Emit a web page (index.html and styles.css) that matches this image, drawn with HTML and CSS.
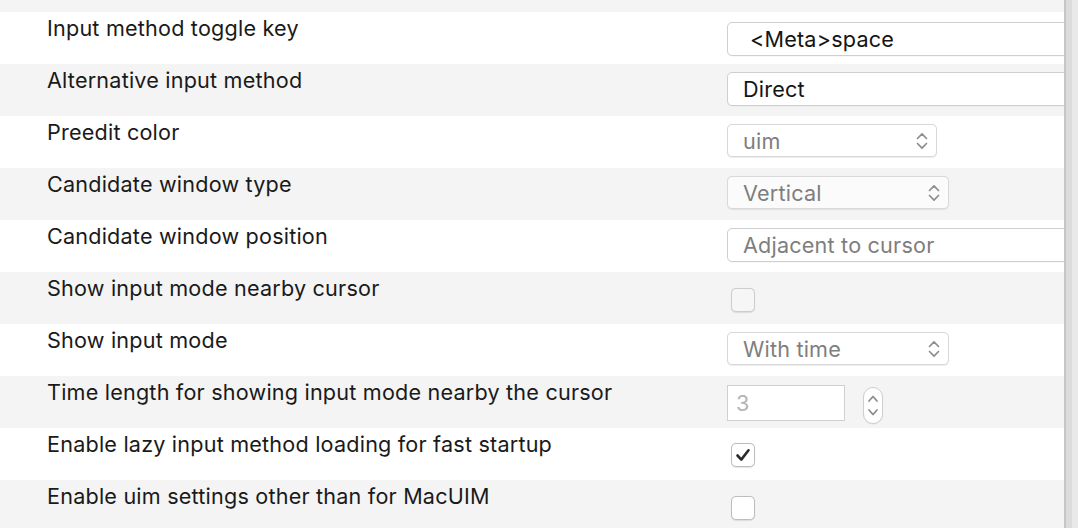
FILE: index.html
```html
<!DOCTYPE html>
<html>
<head>
<meta charset="utf-8">
<link rel="stylesheet" href="styles.css">
</head>
<body>
<div class="window">
  <div class="panel">
    <div class="row alt top"></div>

    <div class="row">
      <div class="label">Input method toggle key</div>
      <div class="ctrl first"><div class="field combo"><span class="val dark">&lt;Meta&gt;space</span></div></div>
    </div>

    <div class="row alt">
      <div class="label">Alternative input method</div>
      <div class="ctrl"><div class="field wide"><span class="val dark direct">Direct</span></div></div>
    </div>

    <div class="row">
      <div class="label">Preedit color</div>
      <div class="ctrl">
        <div class="popup w210"><span class="val">uim</span>
          <svg class="arrows" width="12" height="24" viewBox="0 0 12 24"><path d="M1.5 9.5 L6 4.8 L10.5 9.5 M1.5 14.5 L6 19.2 L10.5 14.5" fill="none" stroke="#8e8e8e" stroke-width="1.7" stroke-linecap="round" stroke-linejoin="round"/></svg>
        </div>
      </div>
    </div>

    <div class="row alt">
      <div class="label">Candidate window type</div>
      <div class="ctrl">
        <div class="popup w222"><span class="val">Vertical</span>
          <svg class="arrows" width="12" height="24" viewBox="0 0 12 24"><path d="M1.5 9.5 L6 4.8 L10.5 9.5 M1.5 14.5 L6 19.2 L10.5 14.5" fill="none" stroke="#8e8e8e" stroke-width="1.7" stroke-linecap="round" stroke-linejoin="round"/></svg>
        </div>
      </div>
    </div>

    <div class="row">
      <div class="label">Candidate window position</div>
      <div class="ctrl"><div class="field wide"><span class="val">Adjacent to cursor</span></div></div>
    </div>

    <div class="row alt">
      <div class="label">Show input mode nearby cursor</div>
      <div class="ctrl check-wrap"><div class="checkbox disabled"></div></div>
    </div>

    <div class="row">
      <div class="label">Show input mode</div>
      <div class="ctrl">
        <div class="popup w222"><span class="val">With time</span>
          <svg class="arrows" width="12" height="24" viewBox="0 0 12 24"><path d="M1.5 9.5 L6 4.8 L10.5 9.5 M1.5 14.5 L6 19.2 L10.5 14.5" fill="none" stroke="#8e8e8e" stroke-width="1.7" stroke-linecap="round" stroke-linejoin="round"/></svg>
        </div>
      </div>
    </div>

    <div class="row alt">
      <div class="label">Time length for showing input mode nearby the cursor</div>
      <div class="ctrl spin-wrap">
        <div class="spinfield"><span class="val light">3</span></div>
        <div class="stepper">
          <svg width="20" height="37" viewBox="0 0 20 37"><path d="M6 14 L10 9.5 L14 14 M6 23 L10 27.5 L14 23" fill="none" stroke="#8a8a8a" stroke-width="1.7" stroke-linecap="round" stroke-linejoin="round"/></svg>
        </div>
      </div>
    </div>

    <div class="row">
      <div class="label">Enable lazy input method loading for fast startup</div>
      <div class="ctrl check-wrap checked-wrap">
        <div class="checkbox">
          <svg width="24" height="24" viewBox="0 0 24 24"><path d="M6.5 12.5 L10.3 16.6 L17.5 7.3" fill="none" stroke="#2b2b2b" stroke-width="2.6" stroke-linecap="round" stroke-linejoin="round"/></svg>
        </div>
      </div>
    </div>

    <div class="row alt last">
      <div class="label">Enable uim settings other than for MacUIM</div>
      <div class="ctrl check-wrap"><div class="checkbox"></div></div>
    </div>
  </div>
  <div class="splitter"><div class="s1"></div><div class="s2"></div><div class="s3"></div></div>
</div>
</body>
</html>
```

FILE: styles.css
```css
* { box-sizing: border-box; }
html, body {
  margin: 0;
  padding: 0;
  width: 1078px;
  height: 528px;
  overflow: hidden;
  background: #ffffff;
}
body {
  font-family: Inter, "Liberation Sans", sans-serif;
  font-size: 21.6px;
  color: #1a1a1a;
}
.window {
  display: flex;
  width: 1078px;
  height: 528px;
}
.panel {
  width: 1064px;
  height: 528px;
  overflow: hidden;
  display: flex;
  flex-direction: column;
}
.row {
  flex: 0 0 52px;
  height: 52px;
  display: grid;
  grid-template-columns: 727px 1fr;
  background: #ffffff;
}
.row.alt { background: #f4f4f4; }
.row.top { flex-basis: 12px; height: 12px; }
.row.last { flex-basis: 48px; height: 48px; }
.label {
  padding-left: 47px;
  padding-top: 3px;
  line-height: 26px;
  white-space: nowrap;
  letter-spacing: 0.2px;
}
.ctrl {
  padding-top: 8px;
  min-width: 0;
  display: flex;
  align-items: flex-start;
}
.ctrl.first { padding-top: 10px; }
.val {
  color: #7e7e7e;
  white-space: nowrap;
  letter-spacing: 0.2px;
}
.val.dark { color: #141414; }
.val.light { color: #b4b4b4; }
.field {
  height: 34px;
  width: 400px;
  flex: 0 0 auto;
  border: 1px solid #cfcfcf;
  border-radius: 5px;
  background: #ffffff;
  display: flex;
  align-items: center;
  padding-left: 22px;
  box-shadow: 0 0.5px 0.5px rgba(0,0,0,0.06);
}
.field.wide { padding-left: 15px; }
.popup {
  height: 33px;
  flex: 0 0 auto;
  border: 1px solid #d9d9d9;
  border-radius: 5px;
  background: #ffffff;
  display: flex;
  align-items: center;
  justify-content: space-between;
  padding-left: 15px;
  padding-right: 8px;
  box-shadow: 0 0.5px 1px rgba(0,0,0,0.08);
}
.row.alt .popup { background: #fbfbfb; }
.w210 { width: 210px; }
.w222 { width: 222px; }
.arrows { display: block; }
.check-wrap { padding-top: 16px; padding-left: 4px; }
.checked-wrap { padding-top: 15px; }
.checkbox {
  width: 24px;
  height: 24px;
  border: 1px solid #bdbdbd;
  border-radius: 5px;
  background: #ffffff;
  box-shadow: 0 0.5px 1px rgba(0,0,0,0.1);
  display: flex;
  align-items: center;
  justify-content: center;
}
.checkbox svg { display: block; margin: -1px; }
.checkbox.disabled { background: #f6f6f6; border-color: #cdcdcd; }
.spin-wrap { padding-top: 9px; gap: 18px; }
.spinfield {
  width: 118px;
  height: 36px;
  border: 1px solid #d0d0d0;
  background: #ffffff;
  display: flex;
  align-items: center;
  padding-left: 8px;
}
.stepper {
  margin-top: 2px;
  width: 20px;
  height: 37px;
  border: 1px solid #cfcfcf;
  border-radius: 10px;
  background: #ffffff;
  overflow: hidden;
  box-shadow: 0 0.5px 1px rgba(0,0,0,0.08);
}
.stepper svg { display: block; margin: -1px; }
.splitter {
  display: flex;
  width: 14px;
  height: 528px;
}
.s1 { width: 2px; background: #c6c6c6; }
.s2 { width: 6px; background: #dcdcdc; }
.s3 { width: 6px; background: #e9e9e9; }
```
